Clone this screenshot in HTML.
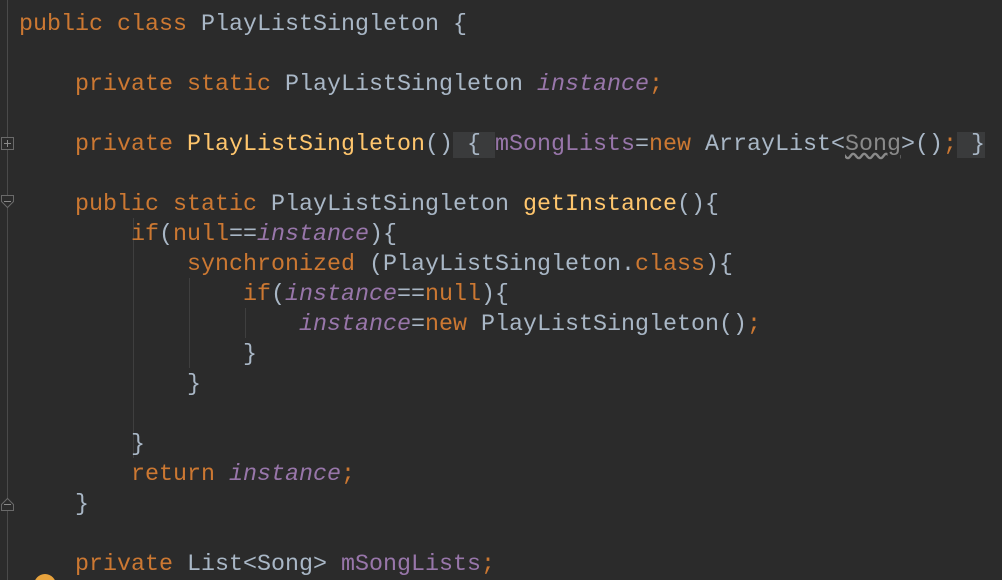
<!DOCTYPE html>
<html><head><meta charset="utf-8"><style>
html,body{margin:0;padding:0;background:#2b2b2b;width:1002px;height:580px;overflow:hidden;position:relative}
.code{position:absolute;left:19px;top:10px;font-family:"Liberation Mono",monospace;font-size:23.33px;line-height:30px;color:#a9b7c6;white-space:pre;letter-spacing:0}
.k{color:#cc7832}.m{color:#ffc66d}.f{color:#9876aa}.i{color:#9876aa;font-style:italic}
.fold{background:#3a3b3c}
.g{position:absolute;width:1px;background:#3f3f3f}
.sq{text-decoration:underline wavy #8a8a8a;color:#8a8a8a}
</style></head><body>
<div class="g" style="left:7px;top:0;height:580px;background:#4a4a4a"></div>
<svg style="position:absolute;left:0;top:0" width="20" height="580">
<rect x="1.5" y="137.5" width="12" height="12" fill="#2b2b2b" stroke="#6a6a6a"/>
<path d="M4 143.5h7M7.5 140v7" stroke="#8a8a8a"/>
<path d="M1.5 195.5h12v6l-6 6l-6-6z" fill="#2b2b2b" stroke="#6a6a6a"/>
<path d="M4 201.5h7" stroke="#8a8a8a"/>
<path d="M1.5 510.5h12v-6l-6-6l-6 6z" fill="#2b2b2b" stroke="#6a6a6a"/>
<path d="M4 504.5h7" stroke="#8a8a8a"/>
</svg>
<div style="position:absolute;left:34px;top:574px;width:22px;height:22px;border-radius:50%;background:#e8a33d"></div>
<div class="g" style="left:133px;top:218px;height:240px"></div>
<div class="g" style="left:189px;top:278px;height:90px"></div>
<div class="g" style="left:245px;top:308px;height:30px"></div>
<div class="code"><span class="k">public class </span>PlayListSingleton {

    <span class="k">private static </span>PlayListSingleton <span class="i">instance</span><span class="k">;</span>

    <span class="k">private </span><span class="m">PlayListSingleton</span>()<span class="fold"> { </span><span class="f">mSongLists</span>=<span class="k">new </span>ArrayList&lt;<span class="sq">Song</span>&gt;()<span class="k">;</span><span class="fold"> }</span>

    <span class="k">public static </span>PlayListSingleton <span class="m">getInstance</span>(){
        <span class="k">if</span>(<span class="k">null</span>==<span class="i">instance</span>){
            <span class="k">synchronized </span>(PlayListSingleton.<span class="k">class</span>){
                <span class="k">if</span>(<span class="i">instance</span>==<span class="k">null</span>){
                    <span class="i">instance</span>=<span class="k">new </span>PlayListSingleton()<span class="k">;</span>
                }
            }

        }
        <span class="k">return </span><span class="i">instance</span><span class="k">;</span>
    }

    <span class="k">private </span>List&lt;Song&gt; <span class="f">mSongLists</span><span class="k">;</span></div>
</body></html>
